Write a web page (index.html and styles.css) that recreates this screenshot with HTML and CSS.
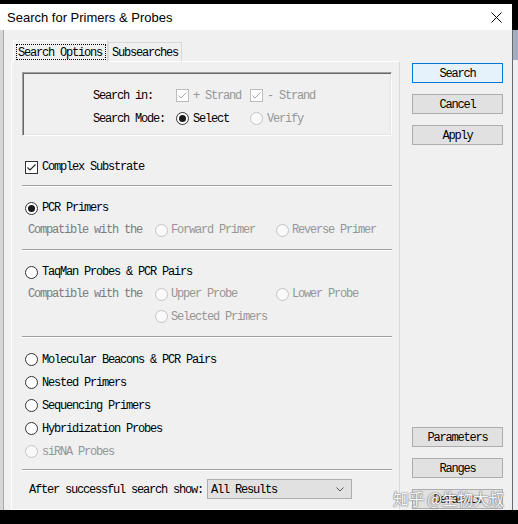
FILE: index.html
```html
<!DOCTYPE html>
<html>
<head>
<meta charset="utf-8">
<title>Search for Primers &amp; Probes</title>
<link rel="stylesheet" href="styles.css">
</head>
<body>
<div class="screen">
  <div class="window">
    <div class="titlebar">
      <span class="title">Search for Primers &amp; Probes</span>
      <svg class="close" width="11" height="11" viewBox="0 0 11 11"><path d="M0.5 0.5 L10.5 10.5 M10.5 0.5 L0.5 10.5" stroke="#000" stroke-width="1" fill="none"/></svg>
    </div>
    <div class="body">
      <div class="edge"></div>
      <div class="tabs-area">
        <div class="tabstrip">
          <div class="tab active mono"><span class="focus">Search Options</span></div>
          <div class="tab mono">Subsearches</div>
        </div>
        <div class="panel mono">
          <div class="group">
            <div class="grow">
              <span>Search in:</span>
              <span class="opt dis"><span class="check dis"><svg width="11" height="11" viewBox="0 0 11 11"><path d="M1.5 5.5 L4 8 L9.5 2.5" stroke="#a6a6a6" stroke-width="1" fill="none"/></svg></span>+ Strand</span>
              <span class="opt dis"><span class="check dis"><svg width="11" height="11" viewBox="0 0 11 11"><path d="M1.5 5.5 L4 8 L9.5 2.5" stroke="#a6a6a6" stroke-width="1" fill="none"/></svg></span>- Strand</span>
            </div>
            <div class="grow">
              <span>Search Mode:</span>
              <span class="opt"><span class="radio on"></span>Select</span>
              <span class="opt dis"><span class="radio dis"></span>Verify</span>
            </div>
          </div>

          <div class="row complex"><span class="opt"><span class="check"><svg width="11" height="11" viewBox="0 0 11 11"><path d="M1.5 5.5 L4 8 L9.5 2.5" stroke="#222" stroke-width="1.1" fill="none"/></svg></span>Complex Substrate</span></div>
          <div class="sep"></div>

          <div class="sec">
            <div class="row"><span class="opt"><span class="radio on"></span>PCR Primers</span></div>
            <div class="sub">
              <span class="hint">Compatible with the</span>
              <span class="opt dis tight"><span class="radio dis"></span>Forward Primer</span>
              <span class="opt dis tight"><span class="radio dis"></span>Reverse Primer</span>
            </div>
          </div>
          <div class="sep"></div>

          <div class="sec">
            <div class="row"><span class="opt"><span class="radio"></span>TaqMan Probes &amp; PCR Pairs</span></div>
            <div class="sub">
              <span class="hint">Compatible with the</span>
              <span class="opt dis tight"><span class="radio dis"></span>Upper Probe</span>
              <span class="opt dis tight"><span class="radio dis"></span>Lower Probe</span>
            </div>
            <div class="sub tall">
              <span></span>
              <span class="opt dis tight"><span class="radio dis"></span>Selected Primers</span>
            </div>
          </div>
          <div class="sep"></div>

          <div class="sec list">
            <div class="row r23"><span class="opt"><span class="radio"></span>Molecular Beacons &amp; PCR Pairs</span></div>
            <div class="row r23"><span class="opt"><span class="radio"></span>Nested Primers</span></div>
            <div class="row r23"><span class="opt"><span class="radio"></span>Sequencing Primers</span></div>
            <div class="row r23"><span class="opt"><span class="radio"></span>Hybridization Probes</span></div>
            <div class="row r23"><span class="opt dis"><span class="radio dis"></span>siRNA Probes</span></div>
          </div>
          <div class="sep"></div>

          <div class="after">
            <span class="txt">After successful search show:</span>
            <div class="select">
              <span class="txt">All Results</span>
              <svg width="8" height="5" viewBox="0 0 8 5"><path d="M0.5 0.5 L4 4 L7.5 0.5" stroke="#555" stroke-width="1" fill="none"/></svg>
            </div>
          </div>
        </div>
      </div>
      <div class="buttons mono">
        <div class="bgroup">
          <div class="btn default">Search</div>
          <div class="btn">Cancel</div>
          <div class="btn">Apply</div>
        </div>
        <div class="bgroup">
          <div class="btn">Parameters</div>
          <div class="btn">Ranges</div>
          <div class="btn">Defaults</div>
        </div>
      </div>
    </div>
  </div>
  <div class="behind">
    <div class="b-top"></div>
    <div class="b-rest"></div>
  </div>
  <div class="watermark">知乎 @生物大叔</div>
</div>
</body>
</html>
```

FILE: styles.css
```css
html, body {
  margin: 0;
  padding: 0;
  background: #000;
}

.screen {
  position: relative;
  width: 518px;
  height: 524px;
  box-sizing: border-box;
  padding-top: 4px;
  display: flex;
  align-items: flex-start;
  background: #000;
  overflow: hidden;
}

.window {
  width: 512px;
  height: 506px;
  display: flex;
  flex-direction: column;
}

.titlebar {
  height: 26px;
  background: #fff;
  display: flex;
  align-items: center;
  justify-content: space-between;
  padding: 0 10px 0 7px;
}

.title {
  font-family: "Liberation Sans", Arial, sans-serif;
  font-size: 13px;
  color: #000;
}

.close {
  display: block;
}

.body {
  height: 480px;
  background: #f0f0f0;
  display: flex;
}

.edge {
  width: 3px;
  background: #d6d6d6;
  border-right: 1px solid #a9a9a9;
}

.mono {
  font-family: "Liberation Mono", "Courier New", monospace;
  font-size: 12px;
  letter-spacing: -1.2px;
  color: #000;
}

.tabs-area {
  margin-left: 7px;
  width: 389px;
  padding-top: 10px;
  display: flex;
  flex-direction: column;
}

.tabstrip {
  height: 21px;
  display: flex;
  align-items: flex-end;
  padding-left: 2px;
  position: relative;
  z-index: 1;
}

.tab {
  height: 19px;
  box-sizing: border-box;
  width: 74px;
  border: 1px solid #d9d9d9;
  border-bottom: none;
  background: #f0f0f0;
  display: flex;
  align-items: center;
  justify-content: center;
  padding-top: 1px;
}

.tab.active {
  width: 95px;
  height: 22px;
  margin-bottom: -1px;
  border-color: #fff #d9d9d9 #fff #fff;
  background: #f0f0f0;
  justify-content: flex-start;
  padding: 0 0 0 2px;
}

.focus {
  display: block;
  width: 90px;
  height: 16px;
  box-sizing: border-box;
  border: 1px dotted #000;
  padding-left: 1px;
  line-height: 15px;
  padding-top: 1px;
}

.panel {
  flex: 1;
  box-sizing: border-box;
  border: 1px solid #fff;
  border-right-color: #d9d9d9;
  border-bottom-color: #fff;
  padding: 10px 7px 0 10px;
  display: flex;
  flex-direction: column;
}

.group {
  height: 64px;
  box-sizing: border-box;
  border: 1px solid;
  border-color: #a0a0a0 #fff #fff #a0a0a0;
  box-shadow: inset 1px 1px 0 #696969, inset -1px -1px 0 #e3e3e3;
  padding: 11px 0 0 70px;
}

.grow {
  display: grid;
  grid-template-columns: 83px 74px 74px;
  height: 23px;
  align-items: center;
}

.opt {
  display: flex;
  align-items: center;
  gap: 4px;
  white-space: nowrap;
}

.opt.tight {
  gap: 3px;
}

.dis {
  color: #969696;
}

.hint {
  color: #7c7c7c;
  white-space: nowrap;
}

.check {
  width: 13px;
  height: 13px;
  box-sizing: border-box;
  border: 1px solid #333;
  background: #fff;
  display: flex;
  align-items: center;
  justify-content: center;
  flex: none;
}

.check.dis {
  border-color: #bcbcbc;
  background: #fff;
}

.check svg {
  display: block;
}

.radio {
  width: 13px;
  height: 13px;
  box-sizing: border-box;
  border: 1px solid #333;
  border-radius: 50%;
  background: #fff;
  display: flex;
  align-items: center;
  justify-content: center;
  flex: none;
}

.radio.on::after {
  content: "";
  width: 7px;
  height: 7px;
  border-radius: 50%;
  background: #1a1a1a;
}

.radio.dis {
  border-color: #c4c4c4;
  background: #f9f9f9;
}

.row {
  height: 22px;
  display: flex;
  align-items: center;
  margin-left: 3px;
}

.row.r23 {
  height: 23px;
}

.complex {
  margin-top: 20px;
}

.sep {
  height: 0;
  border-top: 1px solid #a0a0a0;
  border-bottom: 1px solid #fff;
}

.complex + .sep {
  margin-top: 7px;
}

.sec {
  padding: 10px 0 8px;
}

.sec.list {
  padding: 10px 0 6px;
}

.sub {
  display: grid;
  grid-template-columns: 127px 121px auto;
  height: 22px;
  align-items: center;
  padding-left: 6px;
}

.sub.tall {
  height: 23px;
}

.after {
  display: flex;
  align-items: center;
  gap: 4px;
  padding-left: 7px;
  margin-top: 8px;
  white-space: nowrap;
}

.txt {
  padding-top: 1px;
}

.select {
  width: 145px;
  height: 20px;
  box-sizing: border-box;
  border: 1px solid #adadad;
  background: #e1e1e1;
  display: flex;
  align-items: center;
  justify-content: space-between;
  padding: 0 7px 0 3px;
}

.select svg {
  display: block;
}

.buttons {
  margin-left: 12px;
  width: 91px;
  box-sizing: border-box;
  padding: 33px 0 1px;
  display: flex;
  flex-direction: column;
  justify-content: space-between;
}

.bgroup {
  display: flex;
  flex-direction: column;
  gap: 11px;
}

.btn {
  height: 20px;
  box-sizing: border-box;
  border: 1px solid #adadad;
  background: #e1e1e1;
  display: flex;
  align-items: center;
  justify-content: center;
  padding-top: 2px;
}

.btn.default {
  border-color: #0078d7;
  background: #e5f1fb;
}

.behind {
  width: 6px;
  height: 506px;
  display: flex;
  flex-direction: column;
}

.b-top {
  height: 26px;
  background: #000;
}

.b-rest {
  flex: 1;
  border-left: 1px solid #6a6a6a;
  background: linear-gradient(#a4acc4 0, #a4acc4 30px, #eceef2 30px, #eceef2 100%);
}

.watermark {
  position: absolute;
  left: 393px;
  top: 487px;
  font-family: "Noto Sans CJK SC", sans-serif;
  font-size: 16px;
  line-height: 22px;
  color: rgba(255, 255, 255, 0.95);
  text-shadow: 0 0 1px #7a7a7a, 0 0 1px #7a7a7a, 0 0 2px rgba(110, 110, 110, 0.6);
  white-space: nowrap;
  letter-spacing: -0.5px;
}
```
